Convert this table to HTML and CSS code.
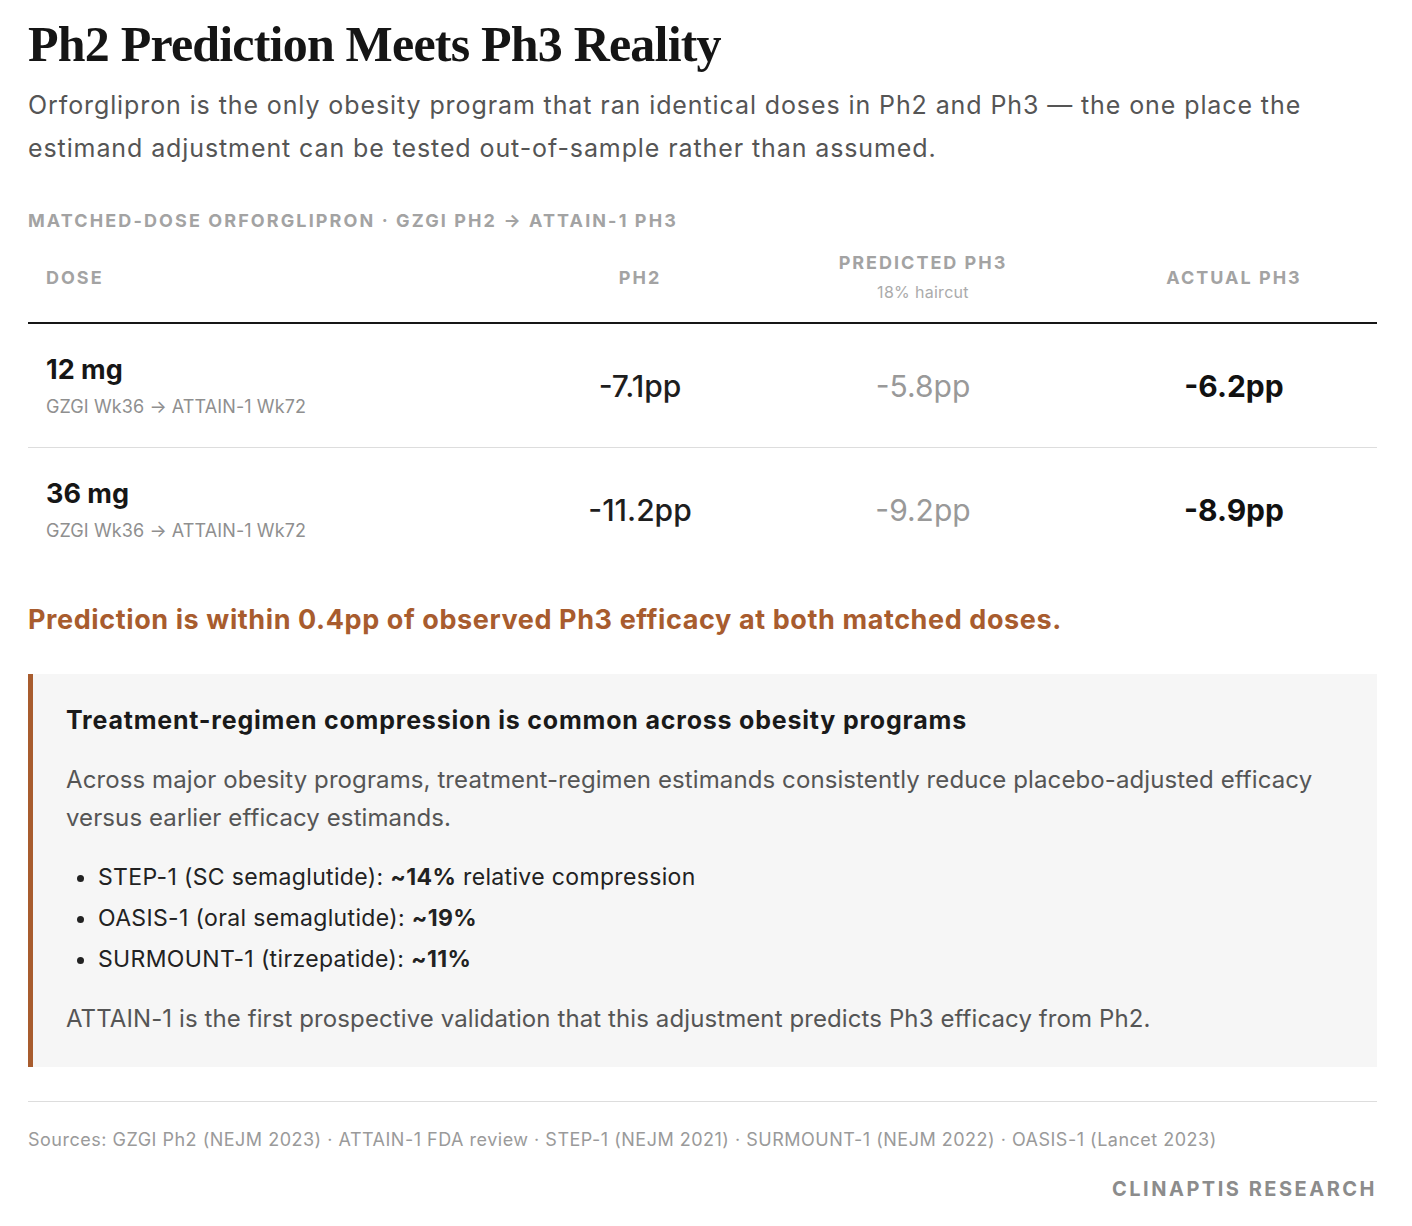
FILE: index.html
```html
<!DOCTYPE html>
<html lang="en">
<head>
<meta charset="utf-8">
<title>Ph2 Prediction Meets Ph3 Reality</title>
<link rel="stylesheet" href="styles.css">
</head>
<body>
<main class="page">
  <h1 class="title">Ph2 Prediction Meets Ph3 Reality</h1>
  <p class="lede">Orforglipron is the only obesity program that ran identical doses in Ph2 and Ph3 — the one place the estimand adjustment can be tested out-of-sample rather than assumed.</p>

  <section class="table-block">
    <div class="caption">Matched-dose orforglipron · GZGI Ph2 → ATTAIN-1 Ph3</div>
    <div class="grid head">
      <div class="hcell left">Dose</div>
      <div class="hcell">Ph2</div>
      <div class="hcell">Predicted Ph3<span class="hsub">18% haircut</span></div>
      <div class="hcell">Actual Ph3</div>
    </div>
    <div class="grid row sep">
      <div class="dose"><span class="dose-main">12 mg</span><span class="dose-sub">GZGI Wk36 → ATTAIN-1 Wk72</span></div>
      <div class="val ph2">-7.1pp</div>
      <div class="val pred">-5.8pp</div>
      <div class="val act">-6.2pp</div>
    </div>
    <div class="grid row">
      <div class="dose"><span class="dose-main">36 mg</span><span class="dose-sub">GZGI Wk36 → ATTAIN-1 Wk72</span></div>
      <div class="val ph2">-11.2pp</div>
      <div class="val pred">-9.2pp</div>
      <div class="val act">-8.9pp</div>
    </div>
  </section>

  <p class="callout">Prediction is within 0.4pp of observed Ph3 efficacy at both matched doses.</p>

  <aside class="note">
    <h2 class="note-title">Treatment-regimen compression is common across obesity programs</h2>
    <p class="note-text">Across major obesity programs, treatment-regimen estimands consistently reduce placebo-adjusted efficacy versus earlier efficacy estimands.</p>
    <ul class="note-list">
      <li>STEP-1 (SC semaglutide): <strong>~14%</strong> relative compression</li>
      <li>OASIS-1 (oral semaglutide): <strong>~19%</strong></li>
      <li>SURMOUNT-1 (tirzepatide): <strong>~11%</strong></li>
    </ul>
    <p class="note-text last">ATTAIN-1 is the first prospective validation that this adjustment predicts Ph3 efficacy from Ph2.</p>
  </aside>

  <footer class="foot">
    <p class="sources">Sources: GZGI Ph2 (NEJM 2023) · ATTAIN-1 FDA review · STEP-1 (NEJM 2021) · SURMOUNT-1 (NEJM 2022) · OASIS-1 (Lancet 2023)</p>
    <div class="brand">Clinaptis Research</div>
  </footer>
</main>
</body>
</html>
```
FILE: styles.css
```css
* { box-sizing: border-box; }
html, body { margin: 0; padding: 0; background: #ffffff; }
body {
  font-family: Inter, "Noto Sans", "Liberation Sans", sans-serif;
  color: #1a1a1a;
}
.page {
  width: 1349px;
  margin: 0 0 0 28px;
  padding-top: 14px;
  padding-bottom: 20px;
}
.title {
  font-family: "Liberation Serif", "DejaVu Serif", serif;
  font-weight: 700;
  font-size: 50px;
  line-height: 60px;
  margin: 0;
  color: #151515;
  letter-spacing: -0.8px;
}
.lede {
  margin: 10px 0 0;
  font-size: 25px;
  line-height: 43px;
  color: #555555;
  letter-spacing: 0.9px;
}
.table-block { margin-top: 39px; }
.caption {
  font-size: 18px;
  font-weight: 700;
  text-transform: uppercase;
  letter-spacing: 2.1px;
  color: #a3a3a3;
  line-height: 24px;
}
.grid {
  display: grid;
  grid-template-columns: 497px 230px 336px 286px;
  align-items: center;
}
.head {
  height: 91px;
  border-bottom: 2px solid #161616;
}
.hcell {
  font-size: 18px;
  font-weight: 700;
  text-transform: uppercase;
  letter-spacing: 2px;
  color: #a3a3a3;
  text-align: center;
  display: flex;
  flex-direction: column;
  align-items: center;
  line-height: 26px;
}
.hcell.left { align-items: flex-start; padding-left: 18px; }
.hsub {
  margin-top: 3px;
  font-size: 16px;
  font-weight: 400;
  text-transform: none;
  letter-spacing: 0.3px;
  color: #ababab;
  line-height: 26px;
}
.row { height: 124px; }
.row.sep { border-bottom: 1px solid #dddddd; }
.dose {
  padding-left: 18px;
  display: flex;
  flex-direction: column;
}
.dose-main {
  font-size: 27px;
  font-weight: 700;
  color: #161616;
  line-height: 34px;
}
.dose-sub {
  font-size: 18px;
  color: #8f8f8f;
  line-height: 24px;
  margin-top: 8px;
  letter-spacing: 0.1px;
}
.val {
  text-align: center;
  font-size: 30px;
  line-height: 36px;
  letter-spacing: 0;
}
.val.ph2 { color: #1e1e1e; font-weight: 500; }
.val.pred { color: #999999; font-weight: 400; }
.val.act { color: #111111; font-weight: 700; }
.callout {
  margin: 28px 0 0;
  font-size: 27px;
  font-weight: 700;
  line-height: 40px;
  color: #a85c2e;
  letter-spacing: 0.6px;
}
.note {
  margin-top: 34px;
  background: #f6f6f6;
  border-left: 5px solid #a85c2e;
  padding: 30px 40px 29px 33px;
}
.note-title {
  margin: 0;
  font-size: 25px;
  font-weight: 700;
  line-height: 32px;
  color: #1a1a1a;
  letter-spacing: 0.8px;
}
.note-text {
  margin: 25px 0 0;
  font-size: 24px;
  line-height: 38px;
  color: #555555;
  letter-spacing: 0.1px;
}
.note-text.last { margin-top: 20px; }
.note-list {
  margin: 20px 0 0;
  padding-left: 32px;
  font-size: 23px;
  line-height: 41px;
  color: #222222;
  letter-spacing: 0.35px;
}
.note-list strong { font-weight: 700; }
.foot {
  margin-top: 34px;
  border-top: 1px solid #dddddd;
}
.sources {
  margin: 26px 0 0;
  font-size: 18px;
  line-height: 24px;
  color: #9a9a9a;
  letter-spacing: 0.5px;
}
.brand {
  margin-top: 25px;
  text-align: right;
  font-size: 20px;
  font-weight: 700;
  text-transform: uppercase;
  letter-spacing: 2.5px;
  color: #8c8c8c;
  line-height: 24px;
}
```
